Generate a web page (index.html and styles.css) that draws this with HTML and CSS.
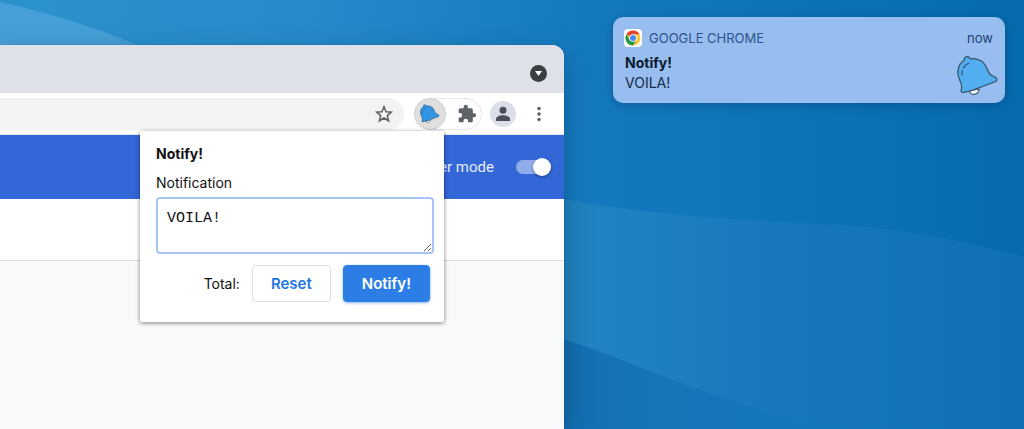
FILE: index.html
```html
<!DOCTYPE html>
<html lang="en">
<head>
<meta charset="utf-8">
<title>Notify!</title>
<link rel="stylesheet" href="styles.css">
</head>
<body>
<svg class="symbols" aria-hidden="true">
  <symbol id="bell" viewBox="0 0 42 42">
    <path d="M12.500 36c.5 4.500 9 5 9.500-2z" fill="#fff" stroke="#40505f" stroke-width="1.200"/>
    <path d="M7.200 5.300C6.500 1.300 11.500.3 13.200 3.700c6-.2 11.300 1.500 14.300 5.300 2.600 3.300 3.300 8.300 5.800 10.500 1.700 1.500 4.500 2 6 3.500 1.300 1.700.5 3.200-1.800 4L18 34.200c-5 2.300-8.500 2.500-11.500 3.300-2 .3-2.800-.8-2.200-2.800 1-3.500.2-6.200-1.800-10.200C0 19.500-.2 10 7.200 5.300z" fill="var(--bell)" stroke="#334e68" stroke-width="1.200" stroke-linejoin="round"/>
    <path d="M11.500 8.200C9 9.200 7.500 11 6.500 13M5.200 15.500c-.4 1.300-.3 2.800.1 4.300" fill="none" stroke="#334e68" stroke-width="1.200" stroke-linecap="round"/>
  </symbol>
</svg>
<main class="desktop">
  <svg class="wallpaper" viewBox="0 0 1024 429" preserveAspectRatio="none" aria-hidden="true">
    <defs>
      <linearGradient id="sky"><stop offset="0" stop-color="#2b93cc"/><stop offset=".3" stop-color="#268bcb"/><stop offset=".57" stop-color="#147ac0"/><stop offset=".75" stop-color="#0c75b8"/><stop offset="1" stop-color="#056bae"/></linearGradient>
      <linearGradient id="wave"><stop offset="0" stop-color="#2285c2"/><stop offset=".45" stop-color="#1779bc"/><stop offset="1" stop-color="#0f70b5"/></linearGradient>
      <linearGradient id="swell"><stop offset="0" stop-color="#1069ad" stop-opacity=".8"/><stop offset="1" stop-color="#0c75b9" stop-opacity=".2"/></linearGradient>
    </defs>
    <path fill="url(#sky)" d="M0 0h1024v429H0z"/>
    <path fill="#46a0d7" d="M0 2C50 13 100 29 140 46H0z"/>
    <path fill="url(#wave)" d="M560 198C650 216 740 220 840 225 910 229 970 243 1024 257V429H560z"/>
    <path fill="url(#swell)" d="M560 338C640 363 690 395 840 429H560z"/>
  </svg>

  <section class="browser">
    <div class="tabstrip">
      <button class="tab-search" aria-label="Search tabs">
        <svg width="17" height="17" viewBox="0 0 17 17"><circle cx="8.500" cy="8.500" r="8.500" fill="#3a3d42"/><path d="M5 6h7l-3.500 5z" fill="#fff"/></svg>
      </button>
    </div>
    <div class="toolbar">
      <div class="omnibox">
        <button aria-label="Bookmark this page">
          <svg width="18" height="18" viewBox="0 0 18 18"><path d="M9 1.800l2.100 4.900 5.200.4-4 3.500 1.200 5.200L9 13l-4.500 2.800 1.200-5.200-4-3.500 5.200-.4z" fill="none" stroke="#5f6368" stroke-width="1.600"/></svg>
        </button>
      </div>
      <div class="extensions">
        <button class="extension" aria-label="Notify!"><svg width="20" height="20"><use href="#bell"/></svg></button>
        <button class="puzzle" aria-label="Extensions">
          <svg width="20" height="20" viewBox="0 0 24 24"><path fill="#5f6368" d="M20.500 11H19V7c0-1.100-.9-2-2-2h-4V3.500a2.500 2.500 0 0 0-5 0V5H4c-1.100 0-2 .9-2 2v3.800h1.500a2.700 2.700 0 0 1 0 5.400H2V20c0 1.100.9 2 2 2h3.800v-1.500a2.700 2.700 0 0 1 5.400 0V22H17c1.100 0 2-.9 2-2v-4h1.500a2.500 2.500 0 0 0 0-5z"/></svg>
        </button>
      </div>
      <button class="profile" aria-label="Profile">
        <svg width="16" height="16" viewBox="0 0 16 16" fill="#4b4f5c"><circle cx="8" cy="4.300" r="3.500"/><path d="M1 15v-2.200C1 10.500 5 9.300 8 9.300s7 1.200 7 3.500V15z"/></svg>
      </button>
      <button class="more" aria-label="Menu">
        <svg width="4" height="16" viewBox="0 0 4 16" fill="#5f6368"><circle cx="2" cy="2.500" r="1.800"/><circle cx="2" cy="8" r="1.800"/><circle cx="2" cy="13.500" r="1.800"/></svg>
      </button>
    </div>
    <header class="page-header">
      <label for="mode">Developer mode</label>
      <input class="switch" id="mode" type="checkbox" role="switch" checked>
    </header>
    <div class="page-actions"></div>
    <div class="page-body"></div>

    <form class="popup">
      <h1>Notify!</h1>
      <label for="message">Notification</label>
      <textarea id="message" spellcheck="false">VOILA!</textarea>
      <div class="actions">
        <span>Total:</span>
        <button class="button" type="reset">Reset</button>
        <button class="button primary" type="button">Notify!</button>
      </div>
    </form>
  </section>

  <aside class="alerts">
    <article class="notification">
      <div class="source">
        <svg width="18" height="18" viewBox="0 0 18 18" aria-hidden="true">
          <rect width="18" height="18" rx="4" fill="#fff"/>
          <circle cx="9" cy="9" r="7.500" fill="#f9ca3c"/>
          <path d="M9 9L2.500 5.250A7.500 7.500 0 0 1 15.500 5.250H9z" fill="#e34335"/>
          <path d="M2.500 5.250A7.500 7.500 0 0 0 9 16.500L12.300 10.800 9 9 5.800 10.900z" fill="#24964b"/>
          <circle cx="9" cy="9" r="3.800" fill="#fff"/><circle cx="9" cy="9" r="3" fill="#4688ee"/>
        </svg>
        <span>GOOGLE CHROME</span>
        <time>now</time>
      </div>
      <div class="content">
        <div><h2>Notify!</h2><p>VOILA!</p></div>
        <svg class="picture" width="42" height="42" aria-hidden="true"><use href="#bell"/></svg>
      </div>
    </article>
  </aside>
</main>
</body>
</html>
```
FILE: styles.css
```css
* { box-sizing: border-box; }
body { margin: 0; font: 14px/20px Inter, "Liberation Sans", sans-serif; color: #111; }
button { padding: 0; border: 0; background: none; font: inherit; }
h1, h2, p { margin: 0; font-size: 14px; }
svg { display: block; }
.symbols { position: absolute; width: 0; height: 0; }

.desktop {
  --bell: #52aeef;
  position: relative;
  display: flex;
  min-height: 100vh;
  overflow: hidden;
}
.wallpaper { position: absolute; inset: 0; width: 100%; height: 100%; }

.browser {
  position: relative;
  display: flex;
  flex: 1;
  flex-direction: column;
  margin-top: 45px;
  border-radius: 0 12px 0 0;
  background: #fff;
  box-shadow: 0 0 1px #345, 0 10px 30px rgba(0, 35, 60, .35);
}
.tabstrip {
  display: flex;
  align-items: center;
  justify-content: flex-end;
  height: 48px;
  padding: 8px 17px 0 0;
  border-radius: inherit;
  background: #dee1e7;
}
.toolbar {
  display: flex;
  align-items: center;
  height: 42px;
  padding-right: 23px;
  border-bottom: 1px solid #e4e6ea;
}
.omnibox {
  display: flex;
  flex: 1;
  align-items: center;
  justify-content: flex-end;
  height: 32px;
  padding-right: 11px;
  border-radius: 0 16px 16px 0;
  background: #f1f3f4;
}
.extensions {
  display: flex;
  align-items: center;
  width: 68px;
  height: 32px;
  margin: 0 8px 0 10px;
  border: 1px solid #e6e7e9;
  border-radius: 16px;
}
.extension {
  --bell: #3296e4;
  display: grid;
  place-items: center;
  width: 32px;
  height: 32px;
  margin-left: -1px;
  border: 1px solid #d0d0d0;
  border-radius: 50%;
  background: #dfdfdf;
}
.puzzle { margin-left: 11px; }
.profile {
  display: grid;
  place-items: center;
  width: 26px;
  height: 26px;
  margin-right: 21px;
  border-radius: 50%;
  background: #dcdfe7;
}
.more { width: 4px; }

.page-header {
  display: flex;
  align-items: center;
  justify-content: flex-end;
  gap: 22px;
  height: 64px;
  padding-right: 13px;
  background: #3366d6;
  color: #e6edfc;
  font: 15px/20px Roboto, sans-serif;
}
.switch {
  position: relative;
  width: 35px;
  height: 18px;
  margin: 0;
  appearance: none;
}
.switch::before {
  content: "";
  display: block;
  width: 32px;
  height: 14px;
  margin-top: 2px;
  border-radius: 7px;
  background: #91abea;
}
.switch::after {
  content: "";
  position: absolute;
  top: 0;
  right: 0;
  width: 18px;
  height: 18px;
  border-radius: 50%;
  background: #fff;
  box-shadow: 0 1px 3px rgba(0, 0, 0, .4);
}
.page-actions { height: 62px; border-bottom: 1px solid #dcdddf; }
.page-body { flex: 1; background: #f8f9fb; }

.popup {
  position: absolute;
  top: 86px;
  right: 120px;
  display: flex;
  flex-direction: column;
  width: 304px;
  padding: 13px 10px 20px 16px;
  border-radius: 2px;
  background: #fff;
  box-shadow: 0 1px 4px rgba(0, 0, 0, .5);
}
.popup label { margin: 9px 0 4px; }
.popup textarea {
  height: 57px;
  padding: 11px 9px;
  border: 2px solid #a5c5f7;
  border-radius: 4px;
  outline: 0;
  background: #fff;
  color: #111;
  font: 15px/17px "Liberation Mono", monospace;
  resize: vertical;
}
.actions {
  display: flex;
  align-items: center;
  justify-content: flex-end;
  gap: 12px;
  padding: 11px 4px 0 0;
}
.button {
  height: 37px;
  padding: 0 18px;
  border: 1px solid #dfe1e4;
  border-radius: 4px;
  background: #fff;
  color: #2376e5;
  font-size: 15px;
  font-weight: 600;
}
.primary {
  border-color: #2c7ee6;
  background: #2c7ee6;
  color: #fff;
  box-shadow: 0 1px 3px rgba(30, 110, 225, .5);
}

.alerts { position: relative; width: 460px; padding: 17px 19px 0 49px; }
.notification {
  padding: 12px 6px 6px 11px;
  border-radius: 10px;
  background: #98bdef;
  box-shadow: 0 2px 12px rgba(0, 40, 80, .35);
}
.source {
  display: flex;
  align-items: center;
  gap: 7px;
  height: 18px;
  padding-right: 6px;
  color: #2c548c;
  font-size: 13px;
}
.source time { margin-left: auto; color: #1e4175; }
.content { display: flex; justify-content: space-between; padding: 6px 0 0 1px; }
.content h2 { color: #0b1b2e; }
.content p { color: #152a44; }
.picture { margin-top: 2px; }
```
